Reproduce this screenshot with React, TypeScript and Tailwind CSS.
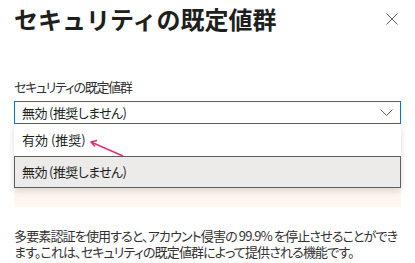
import React from "react";

const jp = '"Noto Sans CJK JP", "Noto Sans", sans-serif';

export default function App() {
  return (
    <div
      className="relative w-[415px] h-[263px] overflow-hidden bg-white text-[#323130]"
      style={{ fontFamily: jp }}
    >
      <div className="flex items-center justify-between pl-[14px] pr-[17px] pt-[3px]">
        <h1 className="text-[24px] leading-[32px] font-bold text-[#201f1e]">
          セキュリティの既定値群
        </h1>
        <svg width="12" height="12" viewBox="0 0 12 12">
          <path d="M0.5 0.5L11.5 11.5M11.5 0.5L0.5 11.5" stroke="#605e5c" strokeWidth="1" fill="none" />
        </svg>
      </div>

      <div className="px-[14px] pt-[43px] w-[415px]">
        <div className="text-[13px] leading-[18px] [font-feature-settings:'palt'] tracking-[-1.3px] mb-[5px]">
          セキュリティの既定値群
        </div>
        <div className="relative">
          <div className="flex h-[23px] items-center justify-between border border-[#0078d4] pl-[7px] pr-[7px] text-[13px] text-[#201f1e] [font-feature-settings:'palt']">
            <span className="tracking-[-0.6px]">無効 (推奨しません)</span>
            <svg width="13" height="7" viewBox="0 0 13 7">
              <path d="M0.5 0.5L6.5 6.5L12.5 0.5" stroke="#605e5c" strokeWidth="1" fill="none" />
            </svg>
          </div>
          <div className="absolute left-0 right-0 top-full z-10 bg-white shadow-[0_3px_7px_rgba(0,0,0,0.14)] text-[13px] text-[#201f1e] [font-feature-settings:'palt']">
            <div className="flex h-[32px] items-center px-[8px]">有効 (推奨)</div>
            <div className="flex h-[32px] items-center border border-[#605e5c] bg-[#edebe9] px-[7px]">
              <span className="tracking-[-0.6px]">無効 (推奨しません)</span>
            </div>
          </div>
        </div>
        <div className="mt-[6px] h-[77px] bg-[#fef7f1]" />
        <p className="mt-[21px] text-[13px] leading-[16px] [font-feature-settings:'palt'] tracking-[-0.85px] whitespace-nowrap">
          多要素認証を使用すると、アカウント侵害の 99.9% を停止させることができ
          <br />
          ます。これは、セキュリティの既定値群によって提供される機能です。
        </p>
      </div>

      <svg
        className="pointer-events-none absolute left-0 top-0 z-20"
        width="415"
        height="263"
        viewBox="0 0 415 263"
      >
        <path d="M123 156L91 142" stroke="#d9317a" strokeWidth="1.5" fill="none" />
        <path d="M97 140.5L91 142L95 146.5" stroke="#d9317a" strokeWidth="1.5" fill="none" strokeLinejoin="round" />
      </svg>
    </div>
  );
}
